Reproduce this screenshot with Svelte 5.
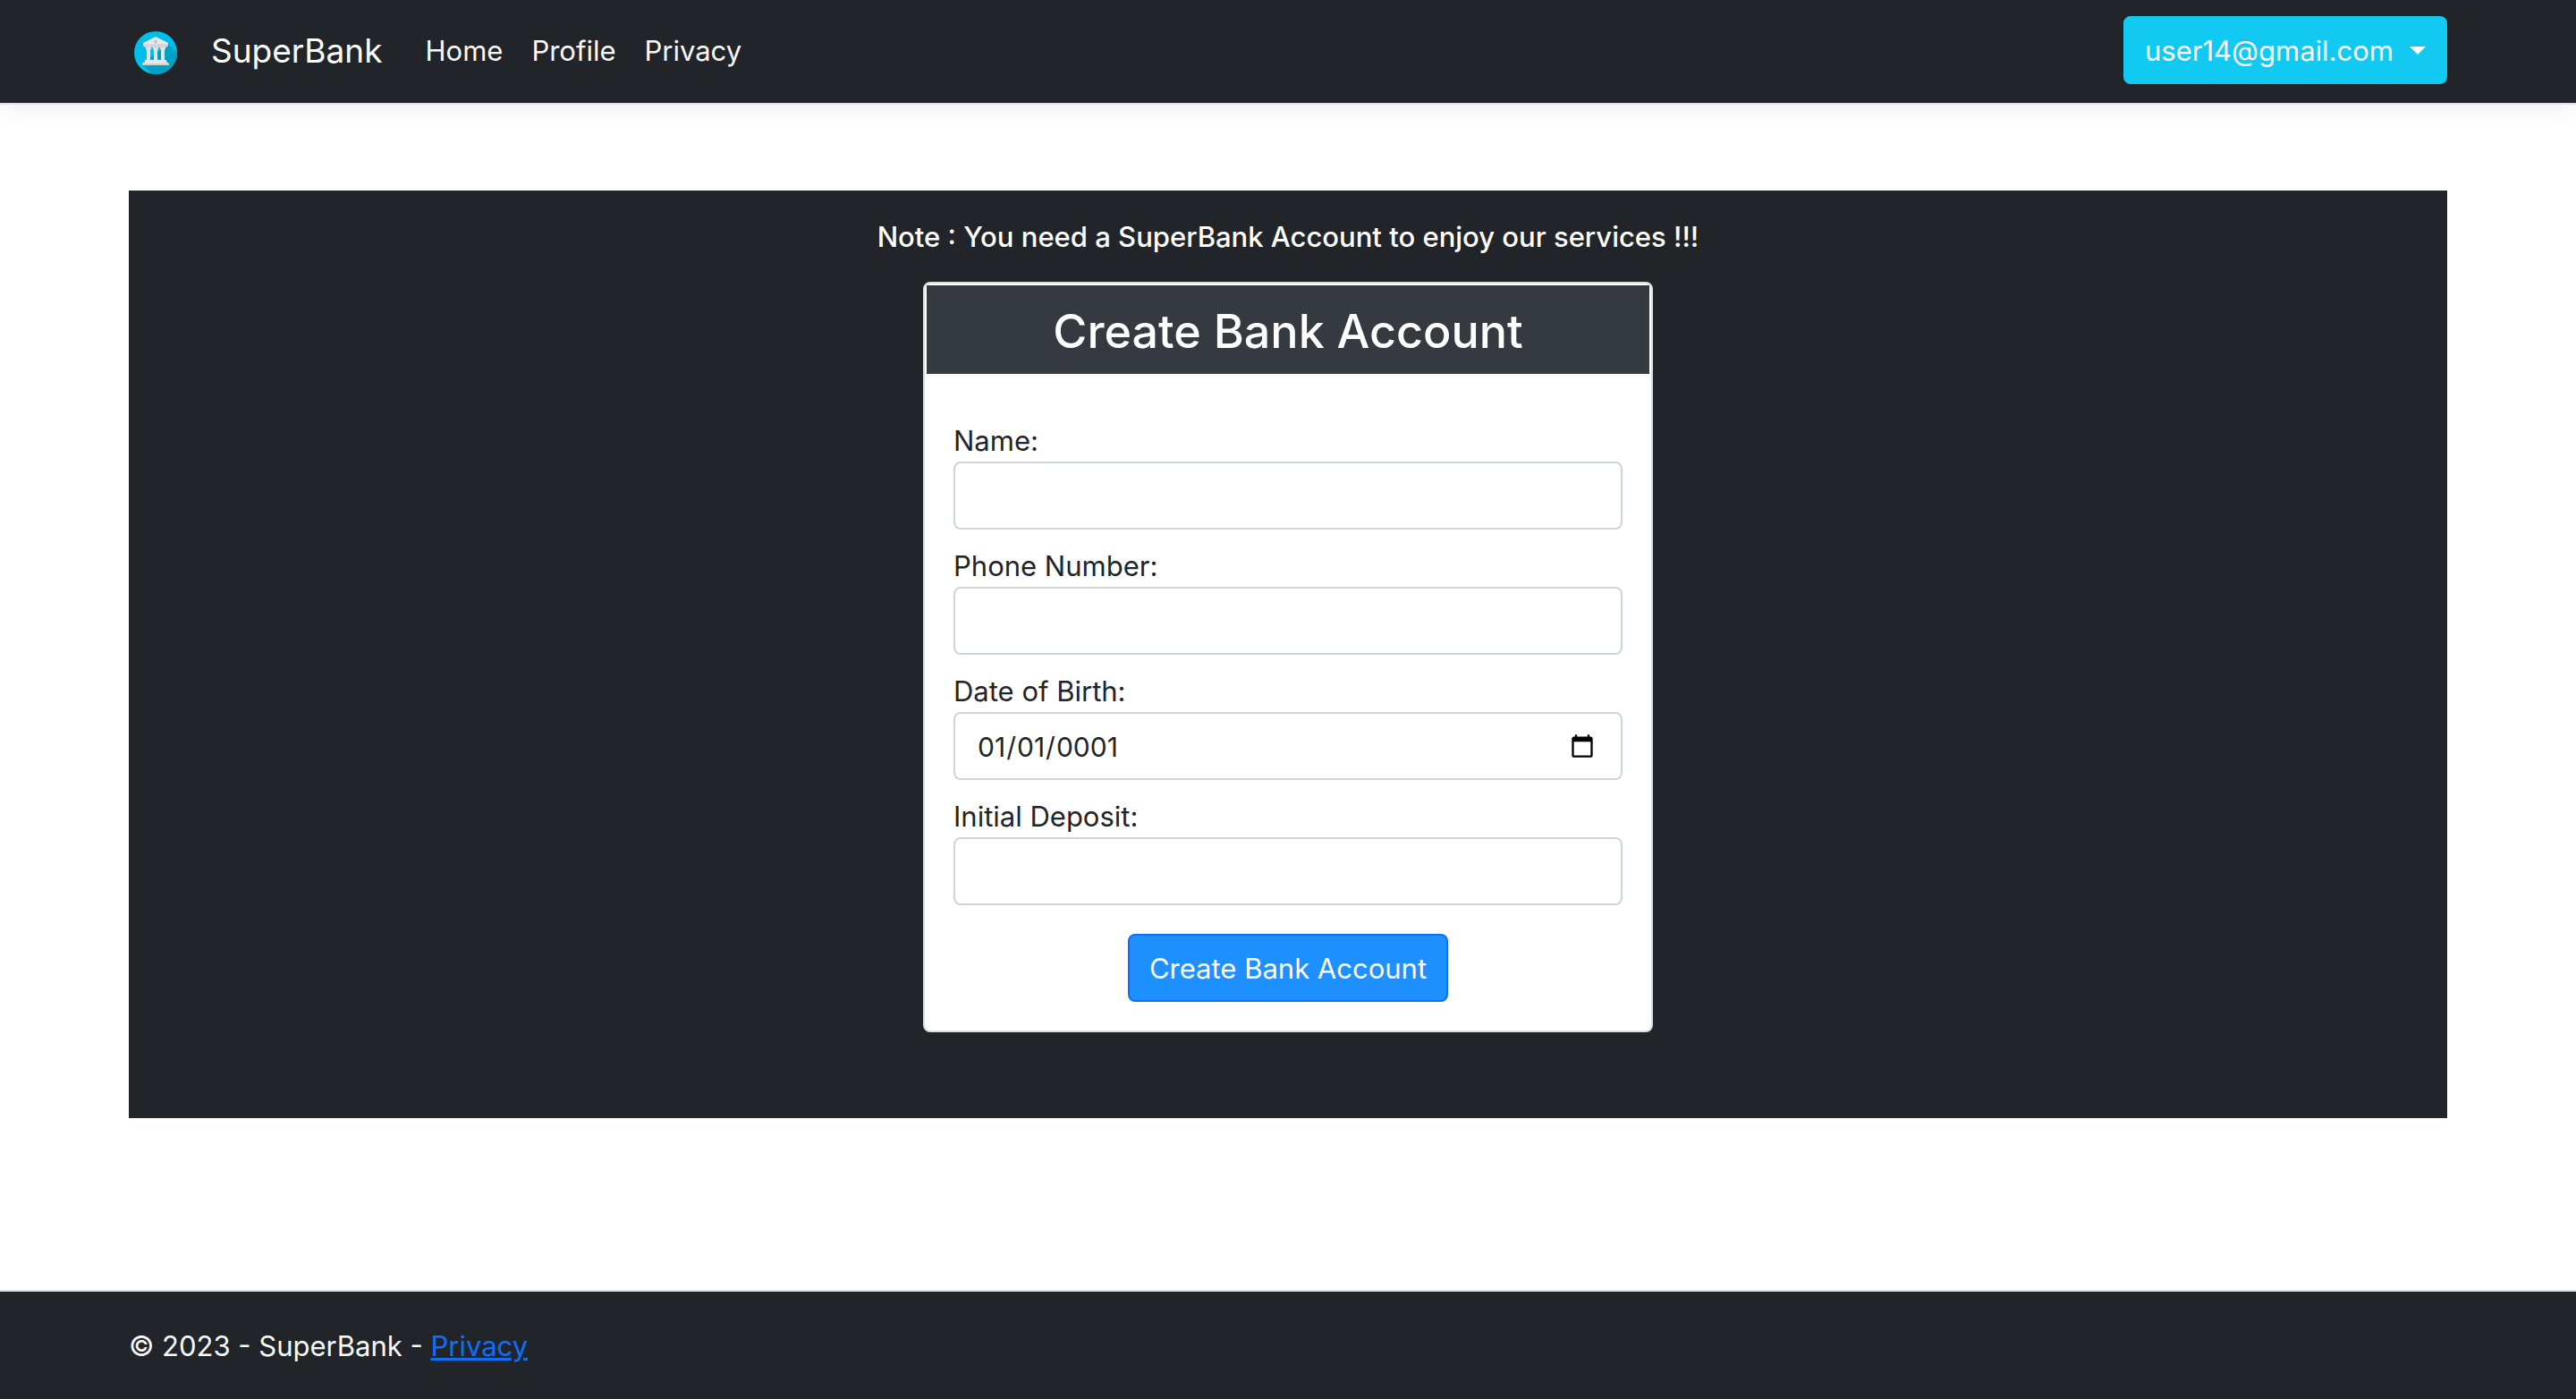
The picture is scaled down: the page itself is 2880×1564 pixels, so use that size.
<script lang="ts">
  const navLinks = ['Home', 'Profile', 'Privacy'];
  let name = $state('');
  let phone = $state('');
  let birthDate = $state('0001-01-01');
  let deposit = $state('');
</script>

<div class="page">
  <header class="navbar">
    <div class="container bar">
      <svg class="logo" viewBox="0 0 48 48" aria-hidden="true">
        <defs>
          <clipPath id="disc"><circle cx="24" cy="24" r="24" /></clipPath>
        </defs>
        <circle cx="24" cy="24" r="24" fill="#00bfe8" />
        <path clip-path="url(#disc)" fill="#009fc4" d="M38 14 L56 32 V56 H28 L9 37 Z" />
        <path fill="#e9e9ec" d="M24 6 L38 13 V16 H10 V13 Z" />
        <path fill="#d5d6da" d="M10 14 H38 V16 L36 18 H12 L10 16 Z" />
        <circle cx="24" cy="11.500" r="2" fill="#c4c5c9" />
        <path fill="#e2e3e7" d="M13 18 h6 v2 l-1 1 v10 l1 2 h-6 l1 -2 v-10 l-1 -1 z M21 18 h6 v2 l-1 1 v10 l1 2 h-6 l1 -2 v-10 l-1 -1 z M29 18 h6 v2 l-1 1 v10 l1 2 h-6 l1 -2 v-10 l-1 -1 z" />
        <path fill="#e9e9ec" d="M12 32 H36 V34 L39 36 V38 H9 V36 L12 34 Z" />
        <path fill="#d0d1d5" d="M9 36 H39 V38 H9 Z" />
      </svg>
      <a class="brand" href="#home">SuperBank</a>
      <nav class="links">
        {#each navLinks as link}
          <a href="#{link.toLowerCase()}">{link}</a>
        {/each}
      </nav>
      <button class="account" type="button" aria-haspopup="menu">
        user14@gmail.com<span class="caret"></span>
      </button>
    </div>
  </header>

  <main class="container content">
    <section class="panel">
      <p class="note">Note : You need a SuperBank Account to enjoy our services !!!</p>
      <form class="card">
        <h1>Create Bank Account</h1>
        <div class="fields">
          <div class="field">
            <label for="name">Name:</label>
            <input id="name" type="text" bind:value={name} />
          </div>
          <div class="field">
            <label for="phone">Phone Number:</label>
            <input id="phone" type="text" bind:value={phone} />
          </div>
          <div class="field">
            <label for="birth">Date of Birth:</label>
            <input id="birth" type="date" bind:value={birthDate} />
          </div>
          <div class="field">
            <label for="deposit">Initial Deposit:</label>
            <input id="deposit" type="text" bind:value={deposit} />
          </div>
          <button class="submit" type="button">Create Bank Account</button>
        </div>
      </form>
    </section>
  </main>

  <footer class="footer">
    <div class="container">© 2023 - SuperBank - <a href="#privacy">Privacy</a></div>
  </footer>
</div>

<style>
  :global(body) {
    margin: 0;
    background: #fff;
  }

  .page,
  .page * {
    box-sizing: border-box;
  }

  .page {
    display: flex;
    flex-direction: column;
    min-height: 100vh;
    color: #212529;
    font: 400 31px/48px Inter, 'Liberation Sans', sans-serif;
  }

  .container {
    width: 100%;
    max-width: 2640px;
    margin: 0 auto;
    padding: 0 24px;
  }

  .navbar {
    background: #212529;
    border-bottom: 2px solid #dee2e6;
    box-shadow: 0 8px 24px rgba(0, 0, 0, 0.05);
    padding: 18px 0 21px;
  }

  .bar {
    display: flex;
    align-items: center;
  }

  .logo {
    width: 48px;
    height: 48px;
    margin: 6px 38px 0 6px;
  }

  .brand {
    padding-top: 2px;
    color: #fff;
    font-size: 37px;
    text-decoration: none;
  }

  .links {
    display: flex;
    gap: 32px;
    margin-left: 48px;
    padding-top: 2px;
  }

  .links a {
    color: #f8f9fa;
    text-decoration: none;
  }

  .account,
  .submit {
    height: 76px;
    padding: 2px 22px 0;
    border: 2px solid #12caf1;
    border-radius: 8px;
    background: #12caf1;
    color: #fff;
    font: inherit;
    cursor: pointer;
  }

  .account {
    display: flex;
    align-items: center;
    gap: 18px;
    margin-left: auto;
  }

  .caret {
    margin-bottom: 2px;
    border: 9px solid transparent;
    border-top-color: #fff;
    border-bottom: 0;
  }

  .content {
    flex: 1;
    padding-top: 96px;
  }

  .panel {
    display: flex;
    flex-direction: column;
    align-items: center;
    padding: 28px 24px 96px;
    background: #212529;
  }

  .note {
    margin: 0 0 26px;
    color: #fff;
    font-weight: 500;
    text-align: center;
  }

  .card {
    width: 100%;
    max-width: 816px;
    border: 2px solid #dfdfdf;
    border-radius: 8px;
    background: #fff;
  }

  h1 {
    margin: 2px 2px 0;
    padding: 18px 16px 14px;
    border-bottom: 2px solid #f8f9fa;
    background: #343a40;
    background-clip: padding-box;
    color: #fff;
    font-size: 52px;
    font-weight: 500;
    line-height: 67px;
    text-align: center;
  }

  .fields {
    display: flex;
    flex-direction: column;
    gap: 18px;
    padding: 50px 32px 32px;
  }

  .field {
    display: flex;
    flex-direction: column;
  }

  label {
    line-height: 46px;
  }

  input {
    width: 100%;
    height: 76px;
    padding: 14px 26px 12px 24px;
    border: 2px solid #ced4da;
    border-radius: 8px;
    background: #fff;
    color: #212529;
    font: inherit;
  }

  input[type='date'] {
    font-size: 30px;
  }

  .submit {
    align-self: center;
    margin-top: 14px;
    border-color: #0d6efd;
    background: #1e90ff;
  }

  .footer {
    padding-top: 1px;
    border-top: 2px solid #dee2e6;
    background: #212529;
    color: #f8f9fa;
    line-height: 119px;
  }

  .footer a {
    color: #0d6efd;
  }
</style>
